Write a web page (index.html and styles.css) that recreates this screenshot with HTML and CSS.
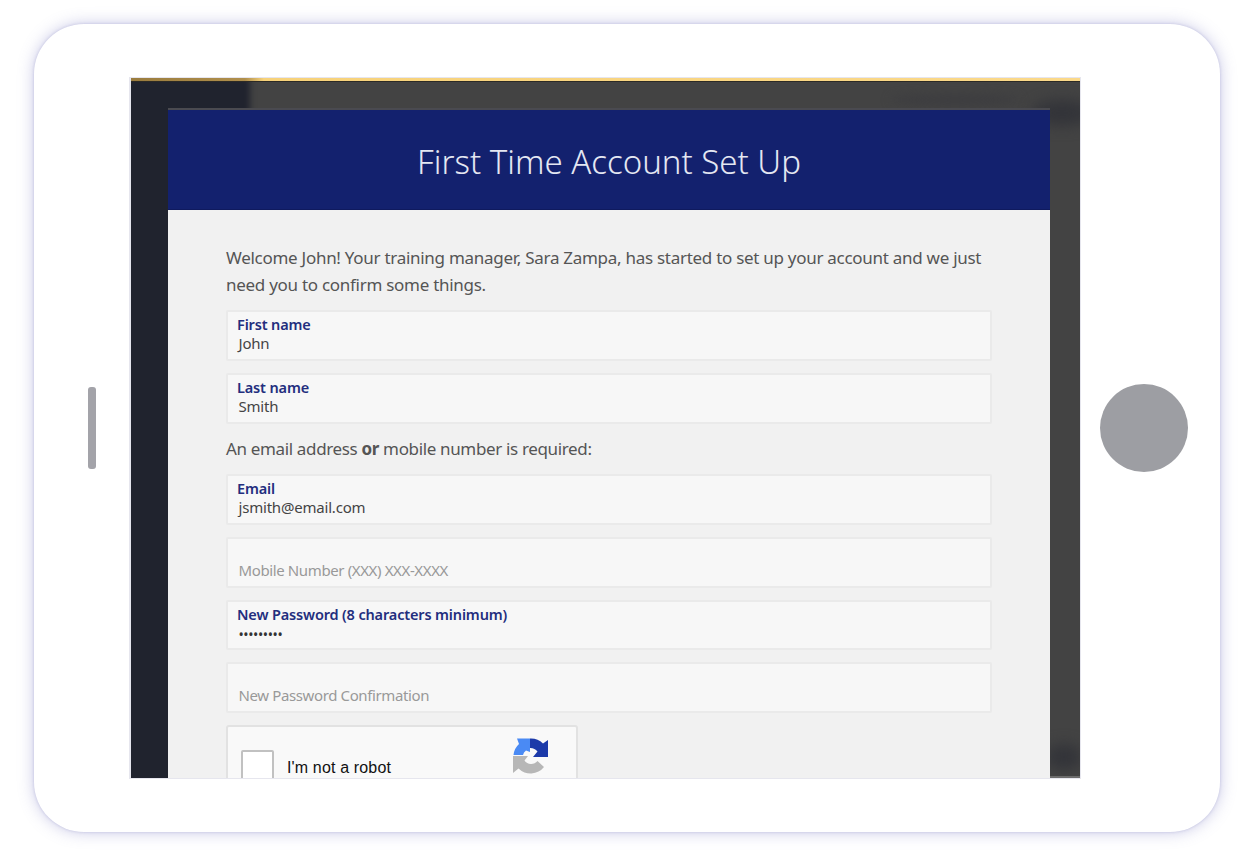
FILE: index.html
```html
<!DOCTYPE html>
<html lang="en">
<head>
<meta charset="utf-8">
<title>First Time Account Set Up</title>
<link rel="stylesheet" href="styles.css">
</head>
<body>
<div class="device">
  <div class="home-bar"></div>
  <div class="screen">
    <div class="gold-bar"></div>
    <div class="app">
      <div class="sidebar"></div>
      <div class="content">
        <div class="smudge smudge-header"></div>
        <div class="smudge smudge-top"></div>
        <div class="smudge smudge-bottom"></div>
        <div class="bottom-strip"></div>
      </div>
    </div>
    <div class="modal">
      <h1 class="modal-title">First Time Account Set Up</h1>
      <div class="modal-body">
        <p class="intro">Welcome John! Your training manager, Sara Zampa, has started to set up your account and we just need you to confirm some things.</p>
        <div class="field"><span class="label">First name</span><span class="value">John</span></div>
        <div class="field"><span class="label">Last name</span><span class="value">Smith</span></div>
        <p class="hint">An email address <b>or</b> mobile number is required:</p>
        <div class="field"><span class="label">Email</span><span class="value">jsmith@email.com</span></div>
        <div class="field empty"><span class="placeholder">Mobile Number (XXX) XXX-XXXX</span></div>
        <div class="field"><span class="label">New Password (8 characters minimum)</span><span class="value dots">•••••••••</span></div>
        <div class="field empty"><span class="placeholder">New Password Confirmation</span></div>
        <div class="captcha">
          <span class="check"></span>
          <span class="captcha-text">I'm not a robot</span>
          <svg class="captcha-logo" viewBox="0 0 36 36" width="36" height="36" aria-hidden="true">
            <path fill="#1c3aa9" d="M17 0.500A17 17 0 0 1 30 5.500L35 2V19H20L24.500 13.500A9 9 0 0 0 17 10Z"/>
            <path fill="#4a8af4" d="M0.500 17A17 17 0 0 1 6 6L4 0.500H17V14L13 12.500A7 7 0 0 0 10 17Z"/>
            <path fill="#b7b7b7" d="M0 35V18H15L11.500 22.500A8 8 0 0 0 24.500 23L31 29A17 17 0 0 1 5.500 30.500Z"/>
          </svg>
        </div>
      </div>
    </div>
  </div>
  <div class="home-button"></div>
</div>
</body>
</html>
```
FILE: styles.css
```css
html, body {
  margin: 0;
  padding: 0;
  background: #ffffff;
}
body {
  width: 1254px;
  height: 856px;
  overflow: hidden;
  box-sizing: border-box;
  padding: 24px 34px;
  font-family: "Noto Sans", "Open Sans", sans-serif;
}
.device {
  width: 1186px;
  height: 808px;
  box-sizing: border-box;
  background: #ffffff;
  border-radius: 50px;
  box-shadow: 0 0 3px rgba(110, 110, 180, 0.3), 0 0 16px rgba(110, 110, 190, 0.38);
  display: flex;
  align-items: center;
  padding-left: 54px;
}
.home-bar {
  width: 8px;
  height: 82px;
  border-radius: 3px;
  background: #a3a3a9;
  margin-right: 34px;
  flex: none;
}
.screen {
  position: relative;
  width: 950px;
  height: 700px;
  box-sizing: border-box;
  border-left: 1px solid #e6e6ee;
  flex: none;
  overflow: hidden;
  display: flex;
  flex-direction: column;
  background: #434343;
  box-shadow: 0 0 0 1px #e6e6ee;
}
.gold-bar {
  position: relative;
  z-index: 2;
  height: 3px;
  flex: none;
  background: linear-gradient(90deg, #9a7c3e 0, #b08f4c 12%, #f7d27a 14%, #fbd98a 100%);
  border-bottom: 1px solid #2c2a26;
}
.app {
  flex: 1;
  display: flex;
  min-height: 0;
}
.sidebar {
  position: relative;
  z-index: 1;
  width: 125px;
  margin: -6px 0 -6px -6px;
  flex: none;
  background: #20232e;
  filter: blur(3px);
}
.content {
  flex: 1;
  position: relative;
  background: #434343;
}
.smudge {
  position: absolute;
  background: #333439;
  border-radius: 50%;
  filter: blur(7px);
}
.smudge-header {
  right: 60px;
  top: 12px;
  width: 130px;
  height: 12px;
  background: #3d3d40;
  filter: blur(5px);
}
.smudge-top {
  right: -12px;
  top: 18px;
  width: 60px;
  height: 26px;
}
.smudge-bottom {
  right: -2px;
  bottom: 8px;
  width: 36px;
  height: 26px;
}
.bottom-strip {
  position: absolute;
  left: 0;
  right: 0;
  bottom: 0;
  height: 2px;
  background: #6c6c6c;
}
.modal {
  position: absolute;
  z-index: 3;
  left: 37px;
  top: 32px;
  width: 882px;
  height: 668px;
  background: #f1f1f1;
  box-shadow: 0 -2px 0 #4a4a50;
}
.modal-title {
  margin: 0;
  height: 100px;
  box-sizing: border-box;
  padding-top: 30px;
  background: #13216e;
  border-bottom: 1px solid #0f1a5e;
  color: #e4e7f2;
  font-size: 33px;
  line-height: 44px;
  font-weight: 300;
  text-align: center;
}
.modal-body {
  width: 766px;
  margin-left: 58px;
  padding-top: 35px;
  display: flex;
  flex-direction: column;
}
.intro, .hint {
  margin: 0;
  color: #555555;
  font-size: 17px;
  letter-spacing: -0.35px;
}
.intro {
  line-height: 26.5px;
  letter-spacing: -0.28px;
  margin-bottom: 12px;
}
.hint {
  line-height: 26px;
  margin-bottom: 12.5px;
}
.hint b {
  font-weight: 700;
}
.field {
  height: 50.75px;
  box-sizing: border-box;
  background: #f7f7f7;
  border: 2px solid #eaeaea;
  border-radius: 2px;
  padding: 3px 9px 0;
  display: flex;
  flex-direction: column;
  margin-bottom: 12px;
  flex: none;
}
.label {
  color: #232e7e;
  font-size: 14.5px;
  line-height: 18px;
  font-weight: 600;
  letter-spacing: -0.15px;
}
.value {
  color: #444444;
  font-size: 15px;
  line-height: 21px;
  padding-left: 1.5px;
  letter-spacing: -0.2px;
}
.dots {
  color: #333333;
  font-size: 14px;
  line-height: 24px;
  letter-spacing: -0.4px;
}
.field.empty {
  justify-content: flex-end;
  padding-bottom: 6px;
}
.placeholder {
  color: #999999;
  font-size: 15px;
  line-height: 20px;
  padding-left: 1.5px;
  letter-spacing: -0.38px;
}
.captcha {
  position: relative;
  width: 352px;
  height: 80px;
  box-sizing: border-box;
  background: #f9f9f9;
  border: 2px solid #e2e2e2;
  border-radius: 3px;
  flex: none;
  display: flex;
  align-items: flex-start;
}
.check {
  width: 33px;
  height: 33px;
  box-sizing: border-box;
  background: #ffffff;
  border: 2px solid #c1c1c1;
  border-radius: 2px;
  margin: 23px 0 0 13px;
  flex: none;
}
.captcha-text {
  font-family: "Liberation Sans", Arial, sans-serif;
  font-size: 16px;
  line-height: 20px;
  letter-spacing: 0.15px;
  color: #111111;
  margin: 31px 0 0 13px;
}
.captcha-logo {
  position: absolute;
  left: 285px;
  top: 11px;
}
.home-button {
  width: 88px;
  height: 88px;
  border-radius: 50%;
  background: #9d9ea3;
  margin-left: 20px;
  flex: none;
}
```
